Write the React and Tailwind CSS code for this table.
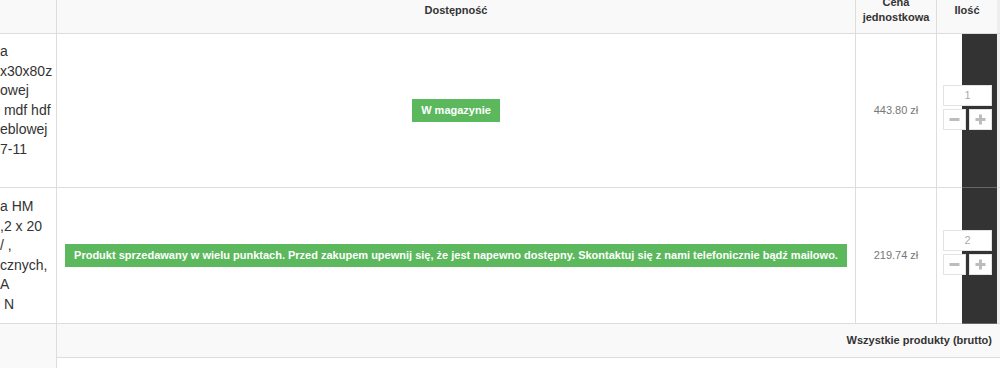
import React from "react";

const grid = "grid grid-cols-[57px_799px_81px_60px_3px]";

const rows = [
  {
    name: ["a", "x30x80z", "owej", " mdf hdf", "eblowej", "7-11", "\u00a0"],
    badge: "W magazynie",
    price: "443.80 zł",
    qty: 1,
    height: "h-[154px]",
  },
  {
    name: ["a HM", ",2 x 20", "/ ,", "cznych,", "A", " N"],
    badge:
      "Produkt sprzedawany w wielu punktach. Przed zakupem upewnij się, że jest napewno dostępny. Skontaktuj się z nami telefonicznie bądź mailowo.",
    price: "219.74 zł",
    qty: 2,
    height: "h-[136px]",
  },
];

const Minus = () => (
  <svg width="11" height="11" viewBox="0 0 11 11">
    <path d="M0.5 5.5h10" stroke="#bcbcbc" strokeWidth="3" />
  </svg>
);

const Plus = () => (
  <svg width="11" height="11" viewBox="0 0 11 11">
    <path d="M0.5 5.5h10M5.5 0.5v10" stroke="#bcbcbc" strokeWidth="3" />
  </svg>
);

const QtyBox = ({value}) => (
  <div className="relative z-10 flex flex-col gap-[3px] w-[49px]">
    <div className="h-[21px] bg-white border border-[#e3e3e3] flex items-center justify-center text-[11px] text-[#aaa]">
      {value}
    </div>
    <div className="flex justify-between">
      <div className="w-[23px] h-[21px] bg-white border border-[#e3e3e3] flex items-center justify-center">
        <Minus />
      </div>
      <div className="w-[23px] h-[21px] bg-white border border-[#e3e3e3] flex items-center justify-center">
        <Plus />
      </div>
    </div>
  </div>
);

const App = () => {
  return (
    <div className="w-[1000px] h-[368px] overflow-hidden bg-white font-['Liberation_Sans',Arial,sans-serif] text-[#333]">
      <div className="-mt-[13px]">
        {/* header */}
        <div className={`${grid} bg-[#f9f9f9] text-[11px] font-bold leading-[15px]`}>
          <div className="border-r border-b border-[#ddd]" />
          <div className="border-r border-b border-[#ddd] flex items-center justify-center">Dostępność</div>
          <div className="border-r border-b border-[#ddd] py-2 flex flex-col items-center justify-center text-center">
            <span>Cena</span>
            <span>jednostkowa</span>
          </div>
          <div className="border-b border-[#ddd] flex items-center justify-center">Ilość</div>
          <div className="border-b border-[#ddd] bg-[#eee]" />
        </div>

        {rows.map((r, i) => (
          <div key={i} className={`${grid} ${r.height}`}>
            <div className="border-r border-b border-[#ddd] overflow-hidden flex flex-col justify-center text-[14px] leading-[19.5px] whitespace-pre">
              {r.name.map((l, j) => (
                <div key={j}>{l}</div>
              ))}
            </div>
            <div className="border-r border-b border-[#ddd] px-2 flex items-center justify-center">
              <span className="bg-[#5cb85c] text-white font-bold text-[11px] leading-[23px] h-[23px] px-[9px] whitespace-nowrap">
                {r.badge}
              </span>
            </div>
            <div className="border-r border-b border-[#ddd] flex items-center justify-center text-[11px] text-[#777]">
              {r.price}
            </div>
            <div className="relative border-b border-[#ddd] flex items-center pl-[6px] pb-[6px]">
              <div className="absolute left-[25px] right-0 top-0 -bottom-px bg-[#333] border-b border-[#666]" />
              <QtyBox value={r.qty} />
            </div>
            <div className="border-b border-[#ddd] bg-[#eee]" />
          </div>
        ))}

        {/* footer */}
        <div className="grid grid-cols-[57px_943px] grid-rows-[34px_20px]">
          <div className="row-span-2 bg-[#f9f9f9] border-r border-[#ddd]" />
          <div className="bg-[#f9f9f9] border-b border-[#ddd] flex items-center justify-end pr-2 text-[11px] font-bold">
            Wszystkie produkty (brutto)
          </div>
          <div className="bg-white" />
        </div>
      </div>
    </div>
  );
};

export default App;
